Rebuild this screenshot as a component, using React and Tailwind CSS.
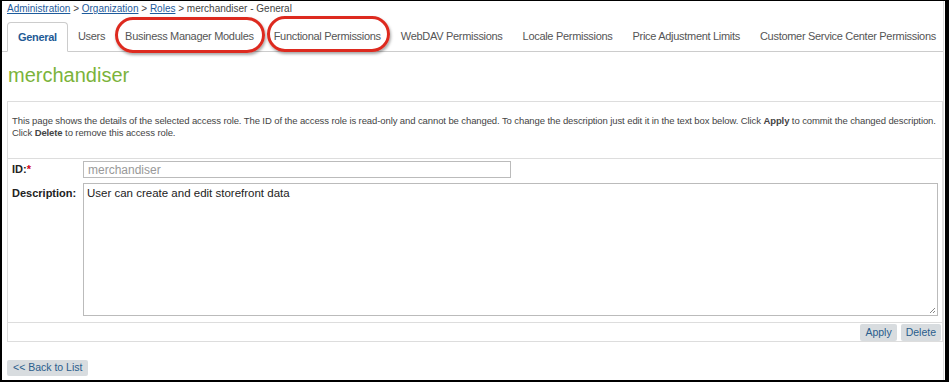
const tabs = [
  "General",
  "Users",
  "Business Manager Modules",
  "Functional Permissions",
  "WebDAV Permissions",
  "Locale Permissions",
  "Price Adjustment Limits",
  "Customer Service Center Permissions",
];

const Crumb = ({ children }) => (
  <a href="#" className="text-[#1d5b9c] underline">
    {children}
  </a>
);

const App = () => {
  return (
    <div
      className="relative w-[949px] h-[382px] overflow-hidden bg-white border-black border-t border-l-2 border-r-[4px] border-b-2 text-[#333]"
      style={{ fontFamily: '"Liberation Sans", Arial, sans-serif' }}
    >
      <div className="flex h-full flex-col border-r border-[#ddd] mr-[1px]">
        {/* breadcrumb */}
        <div className="pl-[5px] pt-[1px] text-[10px] leading-[14px] text-[#444]">
          <Crumb>Administration</Crumb> &gt; <Crumb>Organization</Crumb> &gt;{" "}
          <Crumb>Roles</Crumb> &gt; merchandiser - General
        </div>

        {/* tabs */}
        <div className="mt-[6px] flex h-[30px] items-end border-b border-[#ccc] pl-[5px]">
          {tabs.map((t, i) =>
            i === 0 ? (
              <div
                key={t}
                className="-mb-px flex h-[30px] items-center rounded-t-[4px] border border-b-white border-[#ccc] bg-white px-[10px] text-[11px] tracking-[-0.3px] font-bold text-[#1f5b96]"
              >
                {t}
              </div>
            ) : (
              <div
                key={t}
                className="flex h-[29px] items-center px-[10px] text-[11px] tracking-[-0.3px] text-[#555] whitespace-nowrap"
              >
                {t}
              </div>
            )
          )}
        </div>

        {/* heading */}
        <h1 className="pl-[6px] pt-[11px] text-[20px] leading-[24px] text-[#7bb33a]">
          merchandiser
        </h1>

        {/* content box */}
        <div className="ml-[5px] mt-[14px] flex h-[241px] flex-col border border-[#ddd]">
          <div className="h-[57px] shrink-0 border-b border-[#ddd] px-[4px] pt-[13px] text-[9.5px] tracking-[-0.1px] leading-[12px] text-[#444] whitespace-nowrap">
            This page shows the details of the selected access role. The ID of
            the access role is read-only and cannot be changed. To change the
            description just edit it in the text box below. Click{" "}
            <b>Apply</b> to commit the changed description.
            <br />
            Click <b>Delete</b> to remove this access role.
          </div>

          <div className="flex flex-col gap-[5px] px-[4px] pt-[2px]">
            <div className="flex items-center">
              <label className="w-[71px] text-[11px] font-bold text-[#222]">
                ID:<span className="text-[#d0021b]">*</span>
              </label>
              <div className="flex h-[17px] w-[428px] items-center border border-[#bbb] px-[4px] text-[12px] text-[#999]">
                merchandiser
              </div>
            </div>
            <div className="flex items-start">
              <label className="w-[71px] pt-[2px] text-[11px] font-bold text-[#222]">
                Description:
              </label>
              <div className="relative h-[133px] flex-1 border border-[#bbb] px-[3px] pt-[1px] text-[11.5px] text-[#222]">
                User can create and edit storefront data
                <svg
                  className="absolute bottom-[1px] right-[1px]"
                  width="8"
                  height="8"
                  viewBox="0 0 8 8"
                >
                  <path d="M7 2 L2 7 M7 5 L5 7" stroke="#888" strokeWidth="1" />
                </svg>
              </div>
            </div>
          </div>

          <div className="mt-[6px] flex flex-1 items-center justify-end gap-[4px] border-t border-[#ddd] pr-[1px] pt-[1px]">
            <button className="h-[17px] rounded-[2px] bg-[#d8dcdf] px-[5px] text-[10.5px] text-[#2a5d8c]">
              Apply
            </button>
            <button className="h-[17px] rounded-[2px] bg-[#d8dcdf] px-[5px] text-[10.5px] text-[#2a5d8c]">
              Delete
            </button>
          </div>
        </div>

        <div className="pl-[5px] pt-[12px]">
          <button className="h-[16px] rounded-[2px] bg-[#d8dcdf] px-[6px] text-[10.5px] text-[#2a5d8c]">
            &lt;&lt; Back to List
          </button>
        </div>
      </div>

      {/* annotation ovals */}
      <div className="absolute left-[113px] top-[16px] h-[36px] w-[150px] rounded-[18px] border-[3px] border-[#dd2a1f] shadow-[1px_2px_3px_rgba(0,0,0,0.35)]" />
      <div className="absolute left-[265px] top-[15px] h-[36px] w-[123px] rounded-[18px] border-[3px] border-[#dd2a1f] shadow-[1px_2px_3px_rgba(0,0,0,0.35)]" />
    </div>
  );
};

export default App;
